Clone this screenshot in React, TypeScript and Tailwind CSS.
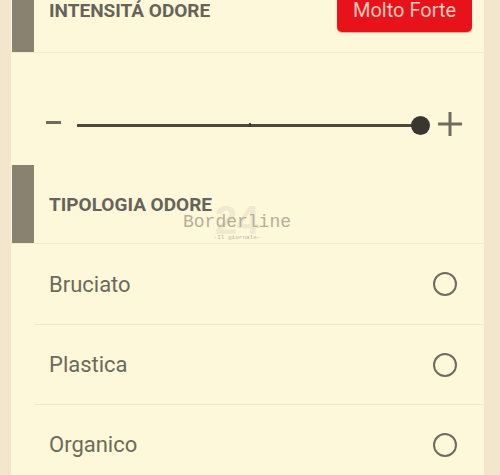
import { useState } from 'react';

const options = ['Bruciato', 'Plastica', 'Organico'];

const SectionHeader = ({ title, children, height }: { title: string; children?: React.ReactNode; height: string }) => (
  <div className={`flex ${height} border-b border-[#f0e9cd]`}>
    <div className="ml-[1px] w-[22px] shrink-0 bg-[#8a8271]" />
    {children}
    {!children && (
      <div className="flex flex-1 items-center pl-[15px] pt-[2px] text-[19px] font-bold text-[#67635a]">{title}</div>
    )}
  </div>
);

const App = () => {
  const [selected, setSelected] = useState<string | null>(null);

  return (
    <div className="h-[475px] w-[500px] overflow-hidden bg-[#f4e6cc] pl-[11px] pr-[16px] font-['Roboto',sans-serif]">
      <div className="relative h-full bg-[#fdf8da]">
        <SectionHeader title="INTENSITÁ ODORE" height="h-[53px]">
          <div className="flex flex-1 items-start justify-between pl-[15px] pr-[12px]">
            <div className="text-[19px] font-bold leading-[22px] text-[#67635a]">INTENSITÁ ODORE</div>
            <button className="flex h-[32px] w-[135px] items-start justify-center rounded-b-[5px] bg-[#e8131a] pt-[1px] shadow-[0_1px_1px_rgba(150,20,20,0.35)]">
              <span className="text-[20px] leading-[18px] text-[#f9c9bd]">Molto Forte</span>
            </button>
          </div>
        </SectionHeader>

        <div className="h-[112px] pl-[35px] pr-[21px] pt-[62px]">
          <div className="flex h-[20px] items-center">
            <div className="-mt-[5px] h-[3px] w-[15px] bg-[#6f6b5e]" />
            <div className="relative ml-[16px] flex h-[20px] flex-1 items-center">
              <div className="h-[3px] flex-1 bg-[#4c483d]" />
              <div className="absolute left-[172px] top-[8px] h-[4px] w-[2px] bg-[#3f3b31]" />
              <div className="-ml-[1px] h-[19px] w-[19px] shrink-0 rounded-full bg-[#3a362e]" />
            </div>
            <svg width="26" height="26" viewBox="0 0 26 26" className="-mt-[3px] ml-[7px]">
              <path d="M13 1v24M1 13h24" stroke="#6f6b5e" strokeWidth="3" />
            </svg>
          </div>
        </div>

        <SectionHeader title="TIPOLOGIA ODORE" height="h-[79px]" />

        <div>
          {options.map((opt, i) => (
            <div
              key={opt}
              onClick={() => setSelected(opt)}
              className={
                i === 0
                  ? 'flex h-[80px] items-center justify-between pl-[38px] pr-[27px]'
                  : 'ml-[24px] flex h-[80px] items-center justify-between border-t border-[#efe8cb] pl-[14px] pr-[27px]'
              }
            >
              <span className="text-[22px] text-[#6d695c]">{opt}</span>
              <span className="flex h-[24px] w-[24px] items-center justify-center rounded-full border-[2.5px] border-[#6f6b5e]">
                {selected === opt && <span className="h-[11px] w-[11px] rounded-full bg-[#6f6b5e]" />}
              </span>
            </div>
          ))}
        </div>

        <div className="pointer-events-none absolute left-[172px] top-[200px] flex w-[108px] flex-col items-center">
          <span className="absolute top-[0px] font-['Liberation_Sans',sans-serif] text-[40px] font-bold leading-[40px] text-[#f1e9cf]">24</span>
          <span className="relative mt-[12px] font-['Liberation_Mono',monospace] text-[18px] leading-[20px] text-[#b7af99]">Borderline</span>
          <span className="relative mt-[2px] font-['Liberation_Mono',monospace] text-[6px] leading-[8px] text-[#bdb59f]">-Il giornale-</span>
        </div>
      </div>
    </div>
  );
};

export default App;
